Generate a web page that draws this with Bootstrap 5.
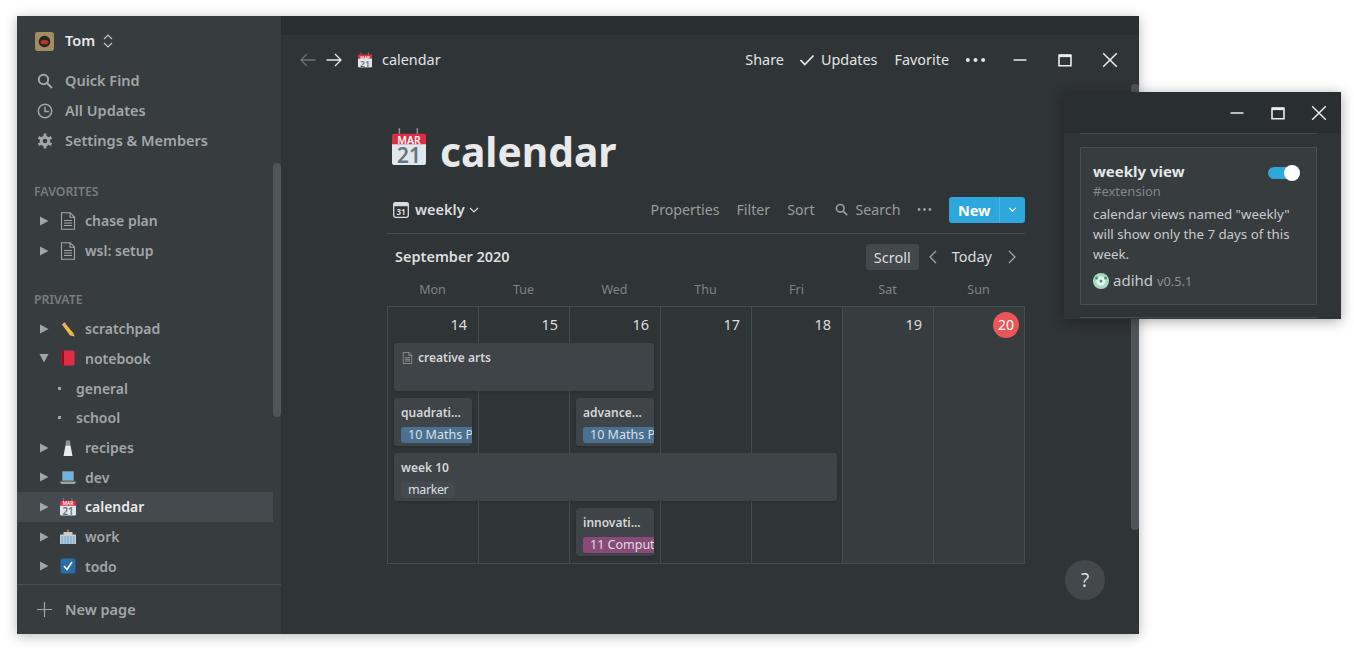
<!DOCTYPE html>
<html lang="en">
<head>
  <meta charset="UTF-8" />
  <meta name="viewport" content="width=device-width, initial-scale=1.0" />
  <title>calendar</title>
  <link href="https://cdn.jsdelivr.net/npm/bootstrap@5.3.3/dist/css/bootstrap.min.css" rel="stylesheet" />
  <style>
    html, body { height: 100%; overflow: hidden; }
    body { background: #fff; font-family: "Noto Sans", "Open Sans", sans-serif; font-size: 14.5px; color: #d9dadb; }
    svg { display: block; flex: none; }

    .app-win { position: absolute; left: 17px; top: 16px; width: 1122px; height: 618px; background: #2f3437; box-shadow: 0 2px 12px rgba(0,0,0,.28); }

    /* sidebar */
    .side { width: 264px; background: #373c3f; position: relative; }
    .side-head { height: 50.5px; padding-left: 18px; color: #e6e7e8; font-weight: 600; }
    .side-head .who { margin-left: 11px; margin-right: 8px; }
    .side-row { height: 29.7px; color: #a3a6a8; font-weight: 600; font-size: 14px; white-space: nowrap; }
    .side-row.top-link { padding-left: 20px; font-size: 14.5px; }
    .side-row.top-link svg { width: 16px; margin-right: 12px; }
    .side-row.page { padding-left: 22px; width: 256px; }
    .side-row.page .tri { width: 10px; margin-right: 11px; }
    .side-row.page .emo { width: 16px; height: 18px; margin-right: 9px; }
    .side-row.sub { padding-left: 41px; }
    .side-row.sub i { width: 3px; height: 3px; background: #a3a6a8; margin-right: 15px; }
    .side-row.on { background: #454a4f; color: #e8e9e9; }
    .side-label { padding-left: 17px; font-size: 12.3px; font-weight: 600; color: #797d80; }
    .sec-fav { height: 28px; margin-top: 22.5px; }
    .sec-priv { height: 28px; margin-top: 20.5px; }
    .side-scroll { position: absolute; right: 0; top: 147px; width: 8px; height: 254px; border-radius: 4px; background: #4f5558; }
    .side-foot { height: 50px; border-top: 1px solid #4a4f52; padding-left: 20px; color: #a3a6a8; font-weight: 600; }
    .side-foot svg { margin-right: 13px; }

    /* main */
    .main-col { position: relative; min-width: 0; }
    .drag-bar { height: 19px; background: #292e30; }
    .top-bar { height: 50px; padding-left: 19px; color: #e3e4e5; font-size: 14.4px; }
    .nav-fwd { margin: 0 16px 0 10px; }
    .crumb-name { margin-left: 10px; }
    .upd-check { margin: 0 6px 0 15px; }
    .fav-link { margin-left: 17px; }
    .top-dots { margin-left: 16px; color: #e3e4e5; }
    .win-btns { gap: 29px; margin: 0 21px 0 26px; }
    .page-pane { padding: 0 114px 0 106px; }
    .page-title { height: 92px; margin-top: 24px; padding-left: 5px; }
    .page-title svg { margin-top: 19px; }
    .page-title h1 { font-size: 40.7px; font-weight: 700; color: #e9e9ea; margin: 22px 0 0 14px; line-height: 1; }
    .view-bar { height: 33px; border-bottom: 1px solid #474c4f; padding: 0 0 15px 6px; }
    .view-name { color: #dcddde; font-weight: 600; margin-left: 6px; }
    .view-tools { color: #9a9d9f; gap: 17px; font-size: 14.2px; }
    .search-tool { margin-left: 3px; }
    .new-split { border-radius: 3px; overflow: hidden; background: #2ea8dc; color: #fff; height: 26px; }
    .new-split b { font-weight: 700; font-size: 14.5px; padding: 0 8.5px; line-height: 26px; }
    .new-split span { width: 26px; height: 26px; border-left: 1px solid #4cb4e0; }
    .month-bar { height: 46px; padding-left: 8px; }
    .month-bar strong { font-weight: 600; color: #dcddde; }
    .scroll-chip { background: #43484d; border-radius: 3px; padding: 0 8px; height: 26px; line-height: 26px; color: #dcddde; }
    .prev-week { margin: 0 15px 0 9px; }
    .today-link { color: #dcddde; }
    .next-week { margin: 0 8px 0 16px; }
    .week-names { display: grid; grid-template-columns: repeat(7, 91px); height: 20px; margin-bottom: 6px; font-size: 12.5px; color: #7f8386; text-align: center; line-height: 20px; }

    .cal-grid { display: grid; grid-template-columns: repeat(6, 91px) 90px; grid-template-rows: 29px repeat(4, 48px) 0; row-gap: 7px; border: 1px solid #474c4f; width: 638px; height: 258px; box-sizing: border-box; }
    .cal-day { grid-row: 1 / -1; border-right: 1px solid #474c4f; text-align: right; padding: 7px 11px 0 0; color: #dcddde; font-size: 14.5px; line-height: 20px; }
    .cal-day.off { background: #373c3f; }
    .cal-day:nth-child(1) { grid-column: 1; }
    .cal-day:nth-child(2) { grid-column: 2; }
    .cal-day:nth-child(3) { grid-column: 3; }
    .cal-day:nth-child(4) { grid-column: 4; }
    .cal-day:nth-child(5) { grid-column: 5; }
    .cal-day:nth-child(6) { grid-column: 6; }
    .cal-day:nth-child(7) { grid-column: 7; border-right: 0; padding-right: 10px; }
    .today-dot { display: inline-block; width: 26px; height: 26px; line-height: 26px; border-radius: 50%; background: #eb5757; color: #fff; text-align: center; margin: -3px -5px 0 0; font-size: 14px; }
    .cal-ev { background: #3f4448; border-radius: 3px; margin: 0 7px 0 6px; padding: 6px 0 0 7px; overflow: hidden; font-size: 12px; font-weight: 600; color: #d5d6d7; white-space: nowrap; z-index: 1; line-height: 18px; box-shadow: 0 1px 2px rgba(0,0,0,.15); }
    .cal-ev svg { display: inline-block; vertical-align: -2px; margin-right: 5px; margin-left: 1px; }
    .ev-arts { grid-column: 1 / span 3; grid-row: 2; }
    .ev-quad { grid-column: 1; grid-row: 3; }
    .ev-adv { grid-column: 3; grid-row: 3; }
    .ev-week { grid-column: 1 / span 5; grid-row: 4; margin-right: 6px; }
    .ev-inno { grid-column: 3; grid-row: 5; }
    .ev-tag { display: inline-block; height: 16px; line-height: 16px; padding: 0 7px; border-radius: 3px; font-weight: 400; font-size: 12.5px; margin-top: 4.5px; color: #dcdfe1; vertical-align: top; }
    .tag-blue { background: #4a7192; }
    .tag-pink { background: #8a4a77; }
    .tag-grey { background: #454a4f; letter-spacing: -.4px; }
    .ev-cut { width: 71px; overflow: hidden; }
    .main-scroll { position: absolute; right: 0; top: 68px; width: 8px; height: 446px; border-radius: 4px; background: #4f5558; }
    .help-btn { position: absolute; left: 784px; top: 544px; width: 40px; height: 40px; border-radius: 50%; background: #43484d; color: #dcddde; font-size: 19px; text-align: center; line-height: 40px; }

    /* extension popup */
    .ext-win { position: absolute; left: 1064px; top: 92px; width: 277px; height: 227px; background: #2f3437; box-shadow: 0 2px 12px rgba(0,0,0,.35); overflow: hidden; }
    .ext-bar { height: 41px; background: #292e30; gap: 25px; padding-right: 14px; }
    .ext-stub { height: 1px; margin: 0 24px 0 16px; background: #474c4f; }
    .ext-card { margin: 13px 24px 12px 16px; height: 158px; background: #373c3f; border: 1px solid #4a4f52; border-radius: 1px; padding: 13px 12px 0; font-size: 13.3px; line-height: 20px; color: #c9cbcc; }
    .ext-card h6 { font-size: 15px; font-weight: 700; color: #e6e7e8; margin: 0 0 1px; line-height: 20px; }
    .ext-tag { color: #83878a; line-height: 18px; margin-bottom: 4px; font-size: 13px; }
    .tog { width: 32px; height: 12px; border-radius: 6px; background: #2ea8dc; position: relative; margin: 6px 4px 0 0; }
    .tog::after { content: ""; position: absolute; right: 0; top: -2px; width: 16px; height: 16px; border-radius: 50%; background: #fff; }
    .ext-by { font-size: 15px; margin-top: 5px; line-height: 22px; }
    .ext-by small { color: #8d9093; font-size: 12.8px; }
  </style>
</head>
<body>
  <!-- shared emoji -->
  <svg width="0" height="0" class="position-absolute">
    <defs>
      <symbol id="ico-cal" viewBox="0 0 36 40">
        <rect x="7" y="0" width="1.600" height="10" fill="#8a9297"/>
        <rect x="26" y="0" width="1.600" height="10" fill="#8a9297"/>
        <path d="M0 8a2 2 0 0 1 2-2h32a2 2 0 0 1 2 2v11H0z" fill="#dd2e44"/>
        <path d="M0 17h36v20a2 2 0 0 1-2 2H2a2 2 0 0 1-2-2z" fill="#e1e8ed"/>
        <text x="18" y="16.500" font-size="11" font-weight="600" fill="#fff" text-anchor="middle" font-family="Noto Sans">MAR</text>
        <text x="18" y="37" font-size="22" font-weight="600" fill="#66757f" text-anchor="middle" font-family="Noto Sans">21</text>
      </symbol>
      <symbol id="ico-doc" viewBox="0 0 16 18">
        <path d="M1.500.7h8.600l4.400 4.400v12.200h-13zM10 .7v4.500h4.500M4 8.500h8M4 11h8M4 13.500h8" fill="none" stroke="#a3a6a8" stroke-width="1.100"/>
      </symbol>
      <symbol id="ico-tri" viewBox="0 0 10 10"><path d="M1 .5l8.500 4.500-8.500 4.500z" fill="#a3a6a8"/></symbol>
      <symbol id="ico-search" viewBox="0 0 16 16"><circle cx="6.500" cy="6.500" r="4.700" fill="none" stroke="currentColor" stroke-width="2"/><path d="M10 10l5 5" stroke="currentColor" stroke-width="2.200" fill="none"/></symbol>
      <symbol id="ico-dots" viewBox="0 0 22 6"><circle cx="3" cy="3" r="2.100" fill="currentColor"/><circle cx="11" cy="3" r="2.100" fill="currentColor"/><circle cx="19" cy="3" r="2.100" fill="currentColor"/></symbol>
      <symbol id="ico-min" viewBox="0 0 16 16"><path d="M1.500 8h13" stroke="#ececec" stroke-width="1.500"/></symbol>
      <symbol id="ico-max" viewBox="0 0 16 16"><path d="M2 3.200h12v10.600H2z" fill="none" stroke="#ececec" stroke-width="1.600"/><path d="M2 3.700h12" stroke="#ececec" stroke-width="2.800"/></symbol>
      <symbol id="ico-x" viewBox="0 0 16 16"><path d="M1.200 1.200l13.600 13.600M14.800 1.200L1.200 14.800" stroke="#ececec" stroke-width="1.500"/></symbol>
    </defs>
  </svg>

  <div class="app-win d-flex">
    <aside class="side d-flex flex-column flex-shrink-0">
      <div class="side-head d-flex align-items-center">
        <svg width="19" height="19" viewBox="0 0 18 18"><rect width="18" height="18" rx="2.500" fill="#a48c62"/><circle cx="9" cy="9" r="5.500" fill="#2b2420"/><path d="M5 9.500c1-2.500 7-2.500 8 0l-1.500 2h-5z" fill="#b03a34"/></svg>
        <span class="who">Tom</span>
        <svg width="10" height="14" viewBox="0 0 10 14"><path d="M1 5l4-4 4 4M1 9l4 4 4-4" fill="none" stroke="#c4c6c7" stroke-width="1.100"/></svg>
      </div>
      <div class="side-row top-link d-flex align-items-center"><svg height="16"><use href="#ico-search"/></svg>Quick Find</div>
      <div class="side-row top-link d-flex align-items-center">
        <svg height="16" viewBox="0 0 16 16"><circle cx="8" cy="8" r="6.700" fill="none" stroke="currentColor" stroke-width="1.500"/><path d="M8 3.800V8.500h4" fill="none" stroke="currentColor" stroke-width="1.500"/></svg>All Updates</div>
      <div class="side-row top-link d-flex align-items-center">
        <svg height="16" viewBox="0 0 16 16"><circle cx="8" cy="8" r="3.800" fill="none" stroke="currentColor" stroke-width="3"/><path d="M8 .5v3M8 12.500v3M1.500 4.200l2.600 1.500M11.900 10.300l2.600 1.500M1.500 11.800l2.600-1.500M11.900 5.700l2.600-1.500" stroke="currentColor" stroke-width="2.800"/></svg>Settings &amp; Members</div>

      <div class="side-label sec-fav d-flex align-items-center">FAVORITES</div>
      <div class="side-row page d-flex align-items-center"><svg class="tri" height="10"><use href="#ico-tri"/></svg><svg class="emo"><use href="#ico-doc"/></svg>chase plan</div>
      <div class="side-row page d-flex align-items-center"><svg class="tri" height="10"><use href="#ico-tri"/></svg><svg class="emo"><use href="#ico-doc"/></svg>wsl: setup</div>

      <div class="side-label sec-priv d-flex align-items-center">PRIVATE</div>
      <div class="side-row page d-flex align-items-center"><svg class="tri" height="10"><use href="#ico-tri"/></svg>
        <svg class="emo" viewBox="0 0 16 18"><path d="M2 4.500l2.500-2 9.500 11.500-4 1.500z" fill="#f4b942"/><path d="M2 4.500l2.500-2 1.500 1.800-2.500 2z" fill="#e9a0a0"/><path d="M10 15.500l4-1.500.5 2.500z" fill="#d9b38c"/></svg>scratchpad</div>
      <div class="side-row page d-flex align-items-center"><svg class="tri" height="10" viewBox="0 0 10 10"><path d="M.5 1h9L5 9.500z" fill="#a3a6a8"/></svg>
        <svg class="emo" viewBox="0 0 16 18"><rect x="1.500" y="1.500" width="13" height="15" rx="1.500" fill="#dd2e44"/><rect x="1.500" y="1.500" width="2.500" height="15" rx="1" fill="#a0041e"/></svg>notebook</div>
      <div class="side-row sub d-flex align-items-center"><i></i>general</div>
      <div class="side-row sub d-flex align-items-center"><i></i>school</div>
      <div class="side-row page d-flex align-items-center"><svg class="tri" height="10"><use href="#ico-tri"/></svg>
        <svg class="emo" viewBox="0 0 16 18"><path d="M6 1.500h4l.5 5h-5z" fill="#8d9296"/><path d="M5.500 6.500h5l2 10.500h-9z" fill="#e8ecef"/></svg>recipes</div>
      <div class="side-row page d-flex align-items-center"><svg class="tri" height="10"><use href="#ico-tri"/></svg>
        <svg class="emo" viewBox="0 0 16 18"><rect x="2" y="3" width="12" height="10" rx="1" fill="#7a8890"/><rect x="3" y="4" width="10" height="8" fill="#6fb3e0"/><path d="M0 13.500h16L15 16H1z" fill="#9aa5ab"/></svg>dev</div>
      <div class="side-row page on d-flex align-items-center"><svg class="tri" height="10"><use href="#ico-tri"/></svg><svg class="emo" viewBox="0 0 36 40"><use href="#ico-cal"/></svg>calendar</div>
      <div class="side-row page d-flex align-items-center"><svg class="tri" height="10"><use href="#ico-tri"/></svg>
        <svg class="emo" viewBox="0 0 16 18"><path d="M7.500 1.500h1V5h-1z" fill="#c9a98c"/><path d="M3.500 4h9v3h-9z" fill="#d5c7b8"/><path d="M0 6.500h16V16H0z" fill="#c3ccd1"/><path d="M1.300 8h1.900v8H1.300zM4.300 8h1.900v8H4.300zM7.100 8H9v8H7.100zM9.900 8h1.900v8H9.900zM12.800 8h1.900v8h-1.900z" fill="#88b4d6"/></svg>work</div>
      <div class="side-row page d-flex align-items-center"><svg class="tri" height="10"><use href="#ico-tri"/></svg>
        <svg class="emo" viewBox="0 0 16 18"><rect x="0.500" y="1.500" width="15" height="15" rx="2" fill="#2a6da8"/><path d="M4 9l3 3.500 5-7.500" fill="none" stroke="#fff" stroke-width="1.500"/></svg>todo</div>

      <div class="side-foot d-flex align-items-center mt-auto">
        <svg width="15" height="15" viewBox="0 0 15 15"><path d="M7.500 0v15M0 7.500h15" stroke="#a3a6a8" stroke-width="1.200"/></svg>New page
      </div>
      <div class="side-scroll"></div>
    </aside>

    <div class="main-col flex-grow-1 d-flex flex-column">
      <div class="drag-bar"></div>
      <header class="top-bar d-flex align-items-center">
        <svg width="16" height="14" viewBox="0 0 16 14"><path d="M15.500 7H1M7 1L1 7l6 6" fill="none" stroke="#6e7275" stroke-width="1.300"/></svg>
        <svg class="nav-fwd" width="16" height="14" viewBox="0 0 16 14"><path d="M.5 7H15M9 1l6 6-6 6" fill="none" stroke="#e8e8e8" stroke-width="1.300"/></svg>
        <svg width="14" height="16" viewBox="0 0 36 40"><use href="#ico-cal"/></svg>
        <span class="crumb-name">calendar</span>
        <div class="d-flex align-items-center ms-auto">
          <span>Share</span>
          <svg class="upd-check" width="16" height="12" viewBox="0 0 15 12"><path d="M1 6l4.300 4.500L14 1.500" fill="none" stroke="#e8e8e8" stroke-width="1.700"/></svg>
          <span>Updates</span>
          <span class="fav-link">Favorite</span>
          <svg class="top-dots" width="21" height="6"><use href="#ico-dots"/></svg>
          <div class="win-btns d-flex align-items-center">
            <svg width="16" height="16"><use href="#ico-min"/></svg>
            <svg width="16" height="16"><use href="#ico-max"/></svg>
            <svg width="16" height="16"><use href="#ico-x"/></svg>
          </div>
        </div>
      </header>

      <main class="page-pane">
        <div class="page-title d-flex align-items-start">
          <svg width="34" height="38" viewBox="0 0 36 40"><use href="#ico-cal"/></svg>
          <h1>calendar</h1>
        </div>
        <div class="view-bar d-flex align-items-center">
          <svg width="16" height="16" viewBox="0 0 16 16"><rect x=".7" y=".7" width="14.600" height="14.600" rx="2" fill="#2f3437" stroke="#dcddde" stroke-width="1.300"/><rect x=".7" y=".7" width="14.600" height="3.500" fill="#dcddde"/><text x="8" y="12.500" font-size="8" font-weight="700" fill="#dcddde" text-anchor="middle" font-family="Noto Sans">31</text></svg>
          <span class="view-name">weekly</span>
          <svg class="ms-1" width="10" height="6" viewBox="0 0 10 6"><path d="M1 1l4 4 4-4" fill="none" stroke="#dcddde" stroke-width="1.100"/></svg>
          <div class="view-tools d-flex align-items-center ms-auto">
            <span>Properties</span><span>Filter</span><span>Sort</span>
            <span class="search-tool d-flex align-items-center"><svg class="me-2" width="13" height="13"><use href="#ico-search"/></svg>Search</span>
            <svg width="15" height="5"><use href="#ico-dots"/></svg>
            <div class="new-split d-flex align-items-center">
              <b>New</b>
              <span class="d-flex align-items-center justify-content-center"><svg width="9" height="5" viewBox="0 0 10 6"><path d="M1 1l4 4 4-4" fill="none" stroke="#fff" stroke-width="1.400"/></svg></span>
            </div>
          </div>
        </div>
        <div class="month-bar d-flex align-items-center">
          <strong>September 2020</strong>
          <div class="d-flex align-items-center ms-auto">
            <span class="scroll-chip">Scroll</span>
            <svg class="prev-week" width="9" height="14" viewBox="0 0 9 14"><path d="M8 1L2 7l6 6" fill="none" stroke="#a3a6a8" stroke-width="1.300"/></svg>
            <span class="today-link">Today</span>
            <svg class="next-week" width="9" height="14" viewBox="0 0 9 14"><path d="M1 1l6 6-6 6" fill="none" stroke="#a3a6a8" stroke-width="1.300"/></svg>
          </div>
        </div>
        <div class="week-names">
          <span>Mon</span><span>Tue</span><span>Wed</span><span>Thu</span><span>Fri</span><span>Sat</span><span>Sun</span>
        </div>
        <div class="cal-grid">
          <div class="cal-day">14</div>
          <div class="cal-day">15</div>
          <div class="cal-day">16</div>
          <div class="cal-day">17</div>
          <div class="cal-day">18</div>
          <div class="cal-day off">19</div>
          <div class="cal-day off"><span class="today-dot">20</span></div>

          <div class="cal-ev ev-arts"><svg width="11" height="12" viewBox="0 0 16 18"><use href="#ico-doc"/></svg>creative arts</div>
          <div class="cal-ev ev-quad">quadrati...<div class="ev-cut"><span class="ev-tag tag-blue">10 Maths P</span></div></div>
          <div class="cal-ev ev-adv">advance...<div class="ev-cut"><span class="ev-tag tag-blue">10 Maths P</span></div></div>
          <div class="cal-ev ev-week">week 10<div><span class="ev-tag tag-grey">marker</span></div></div>
          <div class="cal-ev ev-inno">innovati...<div class="ev-cut"><span class="ev-tag tag-pink">11 Comput</span></div></div>
        </div>
      </main>
      <div class="main-scroll"></div>
      <div class="help-btn">?</div>
    </div>
  </div>

  <div class="ext-win">
    <div class="ext-bar d-flex align-items-center justify-content-end">
      <svg width="16" height="16"><use href="#ico-min"/></svg>
      <svg width="16" height="16"><use href="#ico-max"/></svg>
      <svg width="16" height="16"><use href="#ico-x"/></svg>
    </div>
    <div class="ext-stub"></div>
    <div class="ext-card">
      <div class="d-flex justify-content-between">
        <h6>weekly view</h6>
        <span class="tog"></span>
      </div>
      <div class="ext-tag">#extension</div>
      <div>calendar views named "weekly"<br>will show only the 7 days of this<br>week.</div>
      <div class="ext-by d-flex align-items-center">
        <svg class="me-1" width="16" height="16" viewBox="0 0 16 16"><circle cx="8" cy="8" r="8" fill="#a8dcc0"/><circle cx="8" cy="8" r="4.500" fill="#eaf5ef"/><circle cx="8" cy="8" r="1.500" fill="#3c9a6a"/><circle cx="3.500" cy="5" r="1.500" fill="#3c9a6a"/><circle cx="12.500" cy="5" r="1.500" fill="#3c9a6a"/></svg>
        <span>adihd&nbsp;<small>v0.5.1</small></span>
      </div>
    </div>
    <div class="ext-stub"></div>
  </div>
</body>
</html>
